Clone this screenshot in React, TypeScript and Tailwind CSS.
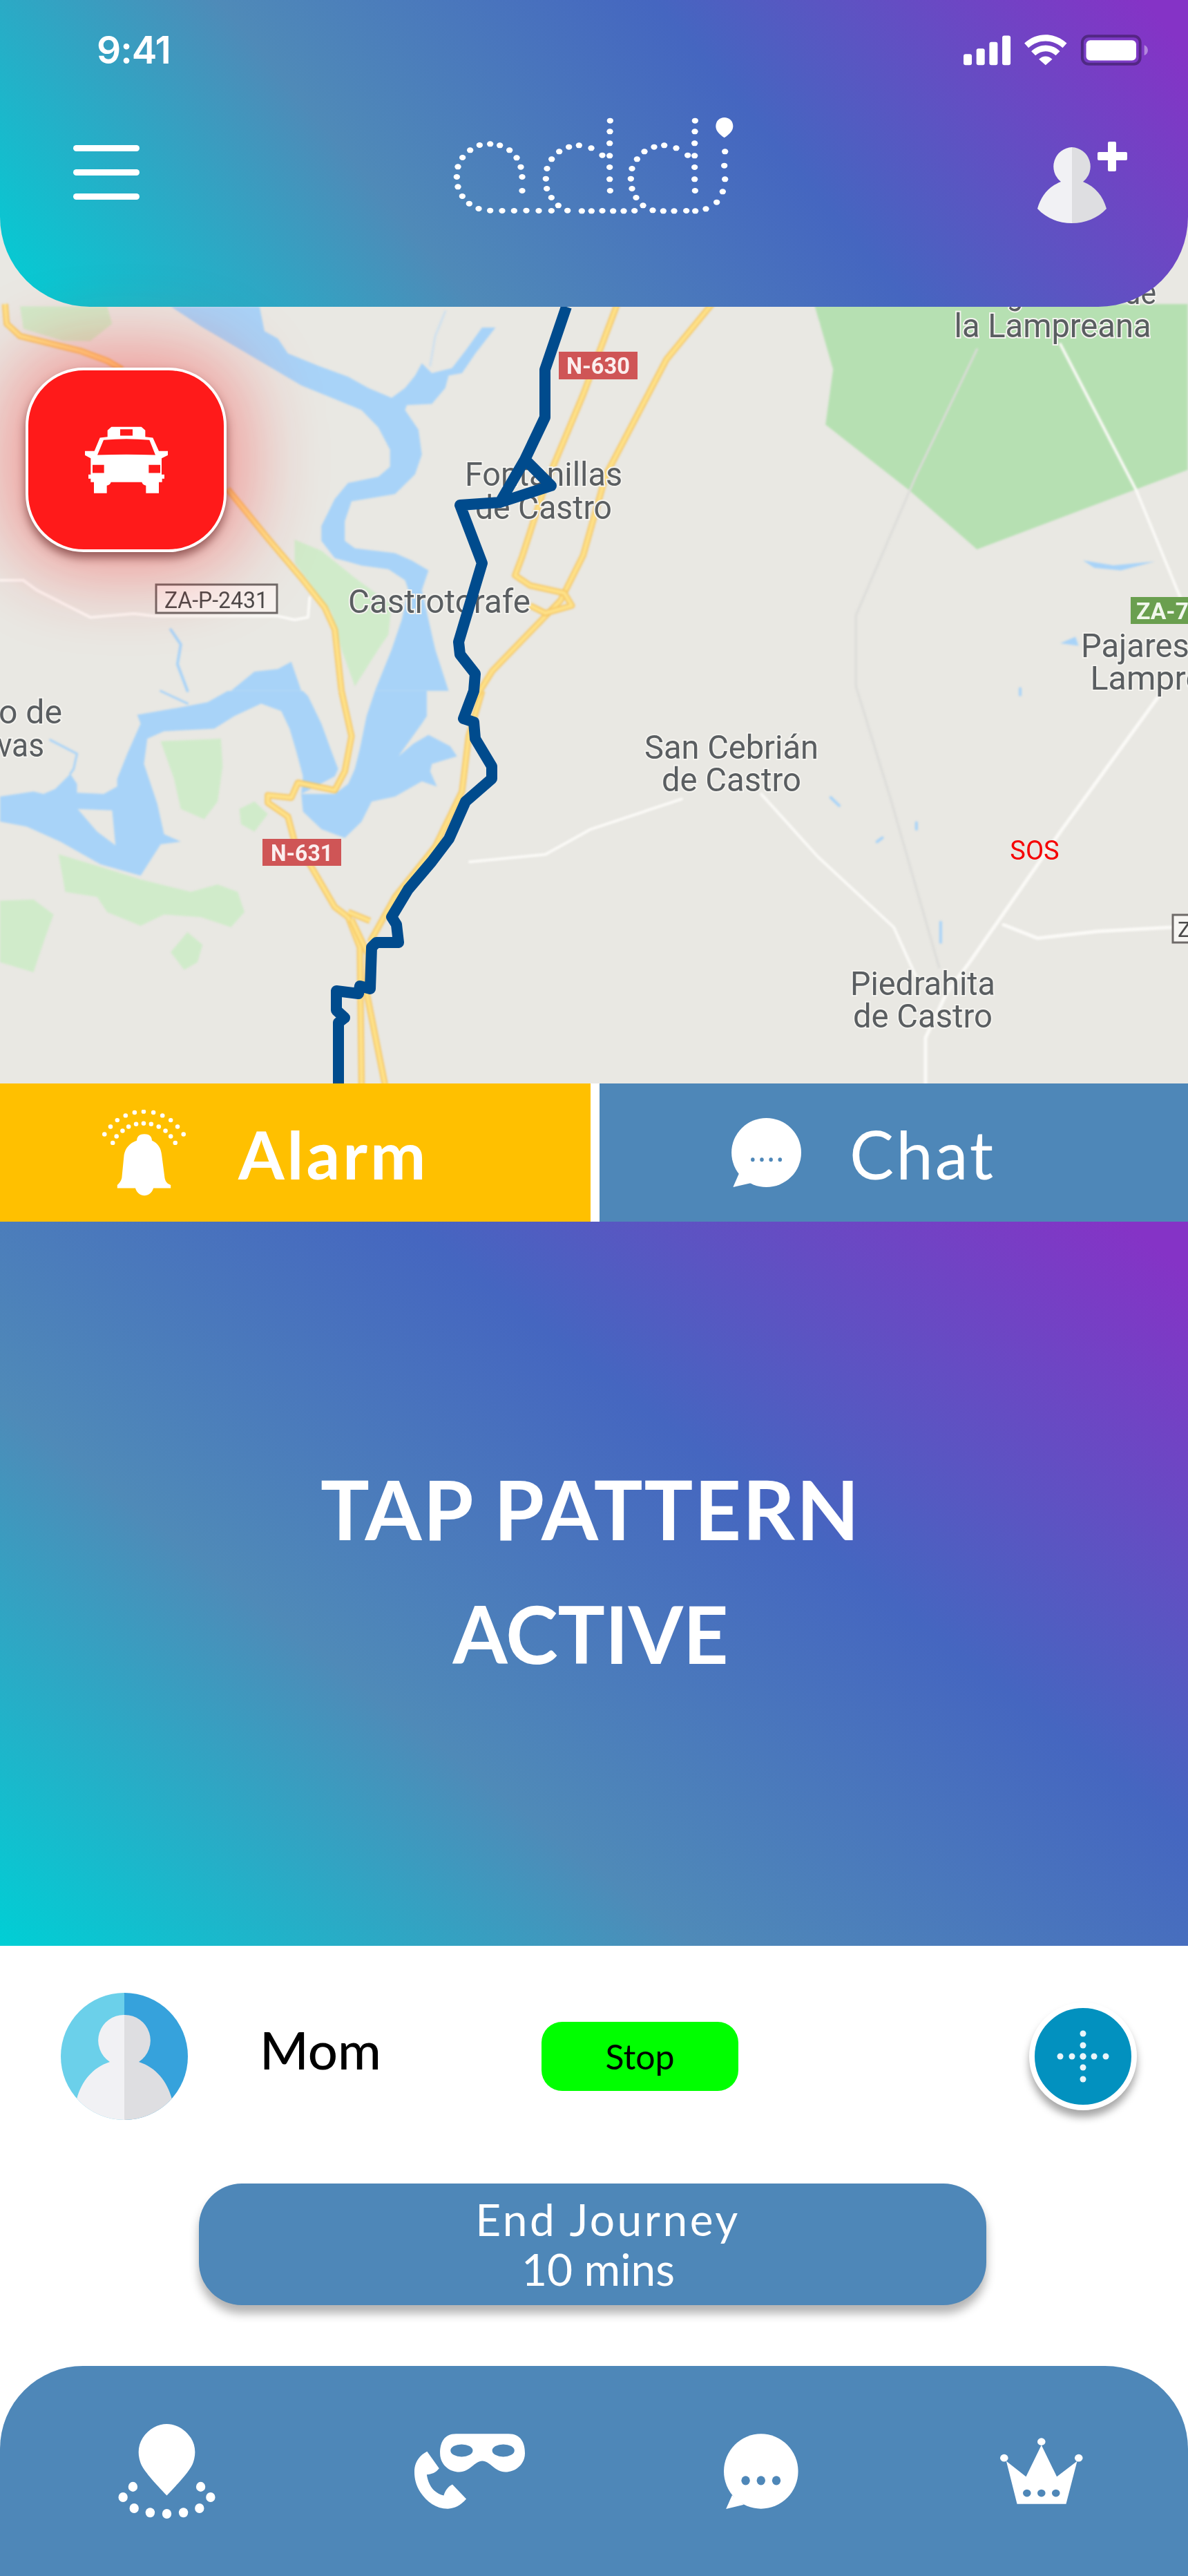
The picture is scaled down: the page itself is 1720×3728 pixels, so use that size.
const logoDots = [
  [283, 240], [329, 235], [371, 241], [413, 262], [444, 295], [462, 335], [468, 378], [468, 438],
  [242, 262], [209, 294], [189, 334], [184, 378], [189, 421], [208, 462], [238, 494], [279, 516],
  [329, 524], [381, 525], [433, 525], [486, 524], [540, 525], [595, 525], [625, 502], [665, 524],
  [727, 526], [769, 526], [816, 525], [863, 526], [909, 526], [956, 525], [993, 502], [1035, 523],
  [1081, 526], [1128, 526], [1181, 525], [1220, 526], [1266, 517], [1313, 488], [1339, 442],
  [1349, 388], [1346, 329], [1349, 268],
  [596, 301], [629, 268], [671, 248], [715, 241], [768, 253], [576, 342], [571, 386], [575, 429], [595, 468],
  [850, 134], [849, 181], [848, 232], [816, 284], [848, 286], [848, 336], [848, 388], [850, 438],
  [967, 301], [999, 268], [1041, 248], [1085, 241], [1137, 253], [945, 342], [940, 386], [945, 429], [963, 468],
  [1219, 134], [1218, 181], [1217, 232], [1187, 284], [1217, 286], [1217, 336], [1217, 388], [1219, 438],
];

// the map shapes were measured on three squashed crops, each has its own transform
const cropTop = "translate(0 440) scale(0.4847 0.357)";
const cropBottom = "translate(0 1000) scale(0.4847 0.3635)";
const cropWide = "translate(0 440) scale(1.0965 0.7273)";

const mapLabels = [
  { t: "Manganeses de", x: 1524, y: 440, w: 300 },
  { t: "la Lampreana", x: 1524, y: 488, w: 285 },
  { t: "Fontanillas", x: 787, y: 703, w: 228 },
  { t: "de Castro", x: 787, y: 751, w: 198 },
  { t: "Castrotorafe", x: 636, y: 887, w: 264 },
  { t: "o de", x: 44, y: 1047, w: 92 },
  { t: "vas", x: 30, y: 1095, w: 68 },
  { t: "San Cebrián", x: 1059, y: 1098, w: 252 },
  { t: "de Castro", x: 1059, y: 1145, w: 202 },
  { t: "Piedrahita", x: 1336, y: 1440, w: 210 },
  { t: "de Castro", x: 1336, y: 1487, w: 202 },
  { t: "Pajares de", x: 1675, y: 951, w: 220 },
  { t: "Lampreana", x: 1700, y: 998, w: 243 },
];

function Road({ d, wide = 9, thin = 5 }: { d: string; wide?: number; thin?: number }) {
  return (
    <>
      <path d={d} fill="none" stroke="#f6c662" strokeWidth={wide} strokeLinejoin="round" vectorEffect="non-scaling-stroke" />
      <path d={d} fill="none" stroke="#fee28a" strokeWidth={thin} strokeLinejoin="round" vectorEffect="non-scaling-stroke" />
    </>
  );
}

function Track({ d, color = "#fbfaf7", width = 4 }: { d: string; color?: string; width?: number }) {
  return <path d={d} fill="none" stroke={color} strokeWidth={width} strokeLinejoin="round" strokeLinecap="round" vectorEffect="non-scaling-stroke" />;
}

function MapLayer() {
  return (
    <svg className="absolute inset-0" width="1720" height="1568" viewBox="0 0 1720 1568">
      <rect width="1720" height="1568" fill="#e9e8e3" />

      <g className="blur-[1.5px]">
        {/* big park + thin lines on the right */}
        <g transform={cropWide}>
          <path d="M1075 0H1568V330L1290 488L1200 370L1090 240L1100 130Z" fill="#b6e0b2" />
          <Track d="M1290 90L1210 340L1130 620L1130 760L1175 980L1240 1320" color="#dcdcd9" width={3} />
          <Track d="M1400 80L1500 370L1560 590" />
          <Track d="M1530 780L1400 1050L1280 1310L1250 1370L1222 1460V1550" width={5} />
          <Track d="M1325 1235L1370 1262L1450 1248L1550 1240" width={5} />
          <Track d="M1005 975L1080 1100L1180 1240L1210 1340" />
          <Track d="M900 985L780 1045L720 1095L620 1110" />
          <path d="M1430 510L1470 520L1525 512L1480 530L1445 525Z" fill="#a8d3f8" />
          <path d="M1400 675L1420 662L1424 680Z" fill="#a8d3f8" />
          <Track d="M1097 982L1108 998M1158 1070L1165 1062M1210 1032V1045M1242 1230V1270M1347 765V778" color="#a8d3f8" width={4} />
        </g>

        {/* upper left, around the red button */}
        <g transform={cropTop}>
          <path d="M60 10H320L335 80L270 150H190L70 100Z" fill="#d0ebca" />
          <path d="M880 955L960 1000L1060 1110L1170 1220L1160 1340L1130 1400L1060 1550L1020 1400L990 1250L880 1050Z" fill="#d0ebca" />
          <path
            fill="#a8d3f8"
            d="M510 10L600 90L700 170L800 250L900 330L1000 385L1080 430L1130 500L1165 590L1165 660L1130 700L1040 725L1000 790L960 900L960 960L1000 1030L1080 1060L1160 1075L1210 1120L1220 1160L1200 1280L1170 1400L1120 1568H1340L1300 1400L1280 1280L1260 1160L1280 1080L1230 1040L1180 1010L1060 990L1030 960L1030 880L1050 800L1180 770L1240 690L1260 610L1250 510L1210 430L1215 410L1290 405L1330 340L1340 290L1380 280L1420 200L1480 95L1440 95L1390 190L1350 260L1290 280L1260 240L1240 290L1210 340L1170 380L1100 340L1040 295L950 250L860 200L830 140L790 110L775 10Z"
          />
          <path fill="#a8d3f8" d="M690 1568L760 1490L830 1480L870 1450L900 1568Z" />
          <Track d="M1330 30L1300 130L1285 250" color="#cfe0ee" width={3} />
          <Track d="M510 1320L540 1380L530 1460L560 1568" color="#a8d3f8" width={4} />
          <Track d="M0 1120H70L110 1160L270 1270L400 1255L460 1265H830L880 1280L920 1270L925 1190" />
          <Road d="M15 0L20 80L60 130L240 190L320 230L365 265M680 750L800 950L900 1110L970 1230L1000 1320L1020 1568" />
        </g>

        {/* lower left, reservoir */}
        <g transform={cropBottom}>
          <g fill="#d0ebca">
            <path d="M480 200L660 190L665 300L650 440L610 510L540 470L520 350Z" />
            <path d="M715 470L760 440L800 490L760 560L720 530Z" />
            <path d="M175 650L300 700L420 750L570 800L650 770L710 800L730 880L690 940L600 900L490 890L420 935L320 880L290 820L195 800Z" />
            <path d="M0 835L100 830L160 890L130 1000L100 1120L0 1080Z" />
            <path d="M560 960L605 1010L590 1080L550 1110L510 1040Z" />
          </g>
          <g fill="#a8d3f8">
            <path d="M1120 0L1095 100L1075 230L1060 310L1040 370L1000 410H900L905 480L960 550L1030 585L1080 520L1110 440L1180 420L1260 360L1305 380L1285 320L1290 290L1365 260L1345 220L1280 175L1235 210L1190 260L1260 130L1275 100V0Z" />
            <path
              fillRule="evenodd"
              d="M680 0L620 45L560 60L410 95L420 130L380 250L350 350V380L310 410L230 405V370L210 330L165 390L130 410L100 400L0 420V520L80 540L180 600L300 690L420 735L480 610L540 600L490 570L470 450L430 290L440 190L490 160L640 150L700 100L780 50L840 80L865 150L885 240L905 340L900 410L1000 340L1010 310L990 240L960 130L920 20L905 0ZM232 470L335 475L345 615L290 560Z"
            />
          </g>
          <Track d="M150 195L230 250L220 310L210 330M480 0L560 50" color="#a8d3f8" width={3} />
          <Road d="M1020 0L1050 180L1030 320L1000 395L890 365L870 425L800 415V445L860 500L880 600L930 700L1000 860L1040 900L1075 1020L1080 1568" />
          <Road d="M1050 910L1100 1050L1095 1200L1150 1568" />
          <Road d="M1040 880L1105 915" />
          <Road d="M1105 1000L1180 820L1300 620L1380 400L1400 180L1440 0" />
        </g>

        {/* roads past Fontanillas */}
        <g transform={cropWide}>
          <Road d="M940 0L880 110L800 340L770 500L740 590L650 730L625 790" />
          <Road d="M815 0L770 180L720 360L690 500L680 540L700 560L745 575L755 600L720 615L700 600" />
        </g>
      </g>

      <g className="blur-[0.6px]">
        {mapLabels.map((l) => (
          <text
            key={l.t + l.y}
            x={l.x}
            y={l.y}
            textAnchor="middle"
            textLength={l.w}
            lengthAdjust="spacingAndGlyphs"
            className="fill-[#5a5e61] stroke-[#f4f3ef] [paint-order:stroke] [font-family:Roboto,sans-serif] text-[48px]"
            strokeWidth="4"
          >
            {l.t}
          </text>
        ))}

        {/* road signs */}
        <rect x="809" y="509" width="114" height="40" fill="#cf5556" />
        <text x="866" y="541" textAnchor="middle" textLength="92" lengthAdjust="spacingAndGlyphs" className="fill-[#fbeeee] font-bold [font-family:Roboto,sans-serif] text-[34px]">N-630</text>
        <rect x="380" y="1214" width="114" height="39" fill="#cf5556" />
        <text x="437" y="1246" textAnchor="middle" textLength="90" lengthAdjust="spacingAndGlyphs" className="fill-[#fbeeee] font-bold [font-family:Roboto,sans-serif] text-[34px]">N-631</text>
        <rect x="226" y="846" width="175" height="41" fill="#f7f3f0" stroke="#6e6a68" strokeWidth="3" />
        <text x="313" y="880" textAnchor="middle" textLength="150" lengthAdjust="spacingAndGlyphs" className="fill-[#4a4a4a] [font-family:Roboto,sans-serif] text-[34px]">ZA-P-2431</text>
        <rect x="1637" y="864" width="90" height="39" fill="#6a9f4f" />
        <text x="1645" y="896" textLength="76" lengthAdjust="spacingAndGlyphs" className="fill-[#f1f7ec] font-bold [font-family:Roboto,sans-serif] text-[34px]">ZA-7</text>
        <rect x="1698" y="1324" width="40" height="40" fill="#f7f6f3" stroke="#6e6a68" strokeWidth="3" />
        <text x="1705" y="1356" className="fill-[#4a4a4a] [font-family:Roboto,sans-serif] text-[32px]">Z</text>

        {/* route */}
        <path
          d="M820 444L789 535L789 604L760 665L724 727L760 665L798 703L724 727L666 731L698 815L664 929L666 947L688 975L686 1000L671 1040L686 1045L688 1069L712 1109V1127L674 1160L650 1214L625 1247L591 1287L567 1327L574 1338L577 1364H545L538 1371L536 1431L521 1427L519 1438L487 1434V1462L499 1473L490 1480V1568"
          fill="none"
          stroke="#004b8d"
          strokeWidth="16"
          strokeLinejoin="round"
        />
      </g>

      <text x="1498" y="1244" textAnchor="middle" className="fill-[#f50000] [font-family:Roboto,sans-serif] text-[38px]">SOS</text>
    </svg>
  );
}

function StatusIcons() {
  return (
    <svg width="267" height="47" viewBox="48 55 800 140">
      <g fill="#fff">
        <rect x="48" y="142" width="36" height="48" rx="9" />
        <rect x="104" y="118" width="36" height="72" rx="9" />
        <rect x="160" y="90" width="36" height="100" rx="9" />
        <rect x="216" y="62" width="36" height="128" rx="9" />
        <path d="M312 95C365 46 443 46 496 95L478 115C435 76 373 76 330 115Z" />
        <path d="M342 130C378 95 430 95 466 130L448 148C422 124 386 124 360 148Z" />
        <path d="M375 165C392 148 416 148 433 165L404 190Z" />
      </g>
      <rect x="563" y="64" width="251" height="122" rx="28" fill="none" stroke="#000" strokeOpacity="0.33" strokeWidth="12" />
      <rect x="580" y="82" width="217" height="88" rx="18" fill="#fff" />
      <path d="M832 103C853 110 853 141 832 148Z" fill="#fff" fillOpacity="0.4" />
    </svg>
  );
}

function Logo() {
  return (
    <svg width="520" height="220" viewBox="0 0 1560 660">
      {logoDots.map(([x, y]) => (
        <ellipse key={`${x}-${y}`} cx={x} cy={y} rx="14" ry="12" fill="#fff" />
      ))}
      <path d="M1346 208C1320 190 1309 175 1309 158C1309 135 1326 120 1346 120C1367 120 1384 135 1384 158C1384 175 1372 190 1346 208Z" fill="#fff" />
    </svg>
  );
}

function AddUserIcon() {
  return (
    <svg width="132" height="119" viewBox="1501 205 132 119">
      <path d="M1552 213A28 28 0 0 0 1536 263C1518 270 1507 284 1502 302C1515 316 1533 323 1552 323Z" fill="#f1f1f4" />
      <path d="M1552 213A28 28 0 0 1 1568 263C1586 270 1597 284 1602 302C1589 316 1571 323 1552 323Z" fill="#dedee1" />
      <rect x="1604" y="205" width="12" height="43" rx="2" fill="#fff" />
      <rect x="1589" y="220" width="43" height="12" rx="2" fill="#fff" />
    </svg>
  );
}

function TaxiIcon() {
  return (
    <svg width="120" height="97" viewBox="360 358 360 290">
      <path
        fill="#fff"
        fillRule="evenodd"
        d="M458 403V375L475 360H605L622 375V403L655 407L681 465H720V483L693 496V567H705V585H695V600H681V648H625V615Q610 612 607 600H473Q470 612 455 615V648H399V600H385V585H375V567H385V496L360 483V465H401L425 407ZM441 417Q540 408 640 417L666 482Q540 478 414 482ZM513 370H567V398H513ZM393 525H443V560H393ZM637 525H687V560H637Z"
      />
    </svg>
  );
}

const bellDots = [
  [137, 311], [145, 278], [154, 250], [165, 230], [177, 217], [189, 213], [202, 217], [214, 230], [225, 250], [234, 278], [242, 311],
  [148, 348], [153, 320], [161, 296], [169, 278], [179, 267], [189, 264], [199, 267], [209, 278], [218, 296], [225, 320], [231, 348],
];

function BellIcon() {
  return (
    <svg width="121" height="125" viewBox="134 205 111 373" preserveAspectRatio="none">
      <path
        fill="#fff"
        d="M190 310C182 310 180 325 180 338C170 350 165 370 163 400L160 500C159 515 156 525 154 530V544H178C180 565 185 576 190 576C195 576 200 565 202 544H225V530C220 525 218 515 217 500L213 400C212 370 208 350 200 338C200 325 198 310 190 310Z"
      />
      {bellDots.map(([x, y]) => (
        <ellipse key={`${x}-${y}`} cx={x} cy={y} rx="3" ry="9.5" fill="#fff" />
      ))}
    </svg>
  );
}

function SmallChatIcon() {
  return (
    <svg width="102" height="100" viewBox="965 240 93 300" preserveAspectRatio="none">
      <ellipse cx="1012" cy="390" rx="46" ry="150" fill="#fff" />
      <path d="M976 480L968 540L995 520Z" fill="#fff" />
      {[994, 1006, 1018, 1030].map((x) => (
        <ellipse key={x} cx={x} cy="421" rx="2.5" ry="9" fill="#4e87b8" />
      ))}
    </svg>
  );
}

function PersonAvatar() {
  return (
    <svg width="184" height="184" viewBox="0 0 184 184" className="shrink-0">
      <defs>
        <clipPath id="avatar-clip">
          <circle cx="92" cy="92" r="92" />
        </clipPath>
      </defs>
      <g clipPath="url(#avatar-clip)">
        <rect width="92" height="184" fill="#6bd0ea" />
        <rect x="92" width="92" height="184" fill="#36a2dc" />
        <path d="M92 32A37 37 0 0 0 71 100C46 108 30 128 23 154L23 190H92Z" fill="#f1f1f4" />
        <path d="M92 32A37 37 0 0 1 113 100C138 108 154 128 161 154L161 190H92Z" fill="#dedee1" />
      </g>
    </svg>
  );
}

function DotsCross() {
  const offsets = [-33, -16, 0, 16, 33];
  return (
    <svg width="80" height="80" viewBox="-40 -40 80 80">
      {offsets.map((o) => (
        <g key={o} fill="#e9f5fa">
          <circle cx={o} cy="0" r="4.5" />
          <circle cx="0" cy={o} r="4.5" />
        </g>
      ))}
    </svg>
  );
}

function NavPin() {
  const dots = [[208, 357], [428, 357], [176, 402], [460, 402], [212, 450], [424, 450], [264, 469], [372, 469], [318, 474]];
  return (
    <svg width="141" height="137" viewBox="160 85 316 410" preserveAspectRatio="none">
      <path fill="#fff" d="M318 395C280 340 240 285 232 250C222 210 226 175 240 145C260 105 290 85 318 85C346 85 376 105 396 145C410 175 414 210 404 250C396 285 356 340 318 395Z" />
      {dots.map(([x, y]) => (
        <ellipse key={`${x}-${y}`} cx={x} cy={y} rx="15" ry="21" fill="#fff" />
      ))}
    </svg>
  );
}

function NavPhoneMask() {
  return (
    <svg width="160" height="109" viewBox="1120 130 358 326" preserveAspectRatio="none">
      <path
        fill="#fff"
        fillRule="evenodd"
        d="M1255 131H1425C1465 131 1478 170 1478 215C1478 260 1450 296 1415 296C1380 296 1365 248 1340 248C1315 248 1300 296 1265 296C1230 296 1203 260 1203 215C1203 170 1215 131 1255 131ZM1273 176A36 27 0 1 0 1273 230A36 27 0 1 0 1273 176ZM1408 176A36 27 0 1 0 1408 230A36 27 0 1 0 1408 176Z"
      />
      <path
        fill="#fff"
        d="M1161 207L1200 280C1190 298 1175 306 1160 307C1165 350 1180 385 1215 398C1220 375 1230 358 1243 350L1288 413C1270 440 1250 455 1228 455C1190 455 1160 425 1140 385C1125 355 1120 325 1120 295C1120 255 1135 225 1161 207Z"
      />
    </svg>
  );
}

function NavChat() {
  return (
    <svg width="108" height="109" viewBox="197 130 243 326" preserveAspectRatio="none">
      <ellipse cx="318" cy="293" rx="121" ry="162" fill="#fff" />
      <path d="M224 396L204 456L262 437Z" fill="#fff" />
      {[268, 318, 368].map((x) => (
        <ellipse key={x} cx={x} cy="333" rx="14" ry="20" fill="#4e87b8" />
      ))}
    </svg>
  );
}

function NavCrown() {
  return (
    <svg width="120" height="96" viewBox="1093 143 269 290" preserveAspectRatio="none">
      <path fill="#fff" d="M1113 245L1177 313L1227 175L1277 313L1343 245L1307 432H1148Z" />
      {[[1227, 160], [1106, 231], [1348, 231]].map(([x, y]) => (
        <ellipse key={x} cx={x} cy={y} rx="13" ry="16" fill="#fff" />
      ))}
      {[1180, 1227, 1274].map((x) => (
        <ellipse key={x} cx={x} cy="385" rx="13" ry="16" fill="#4e87b8" />
      ))}
    </svg>
  );
}

export default function App() {
  return (
    <div className="w-[1720px] h-[3728px] flex flex-col overflow-hidden bg-white font-['Lato',sans-serif] text-white">
      {/* map with header on top */}
      <div className="relative h-[1568px]">
        <MapLayer />

        <header className="relative h-[444px] rounded-b-[130px] bg-[linear-gradient(50deg,#00cfd5_0%,#4f8ab8_33%,#4566c0_63%,#8533c6_97%)]">
          <div className="flex items-center justify-between pl-[140px] pr-[58px] h-[94px] pt-[50px]">
            <span className="font-['Inter',sans-serif] font-semibold text-[55px] leading-none tracking-[-1px]">9:41</span>
            <StatusIcons />
          </div>
          <div className="flex items-start pl-[106px] pt-[36px]">
            <div className="flex flex-col gap-[26px] mt-[80px]">
              <div className="w-[96px] h-[9px] rounded-full bg-white" />
              <div className="w-[96px] h-[9px] rounded-full bg-white" />
              <div className="w-[96px] h-[9px] rounded-full bg-white" />
            </div>
            <div className="ml-[398px]">
              <Logo />
            </div>
            <div className="ml-[381px] mt-[75px]">
              <AddUserIcon />
            </div>
          </div>
        </header>

        <div className="absolute left-[37px] top-[532px] w-[291px] h-[267px] flex items-center justify-center rounded-[84px] border-4 border-white bg-[#ff1a1a] shadow-[0_8px_14px_rgba(60,0,0,0.5),0_0_110px_30px_rgba(255,30,30,0.4)]">
          <TaxiIcon />
        </div>
      </div>

      {/* alarm / chat */}
      <div className="flex h-[200px] gap-[13px]">
        <div className="w-[855px] flex items-center bg-[#ffc000] pl-[148px] gap-[76px]">
          <BellIcon />
          <span className="pt-[4px] text-[96px] font-bold leading-none tracking-[4px]">Alarm</span>
        </div>
        <div className="flex-1 flex items-center bg-[#4e87b8] pl-[190px] gap-[70px]">
          <SmallChatIcon />
          <span className="pt-[4px] text-[96px] leading-none tracking-[3px]">Chat</span>
        </div>
      </div>

      {/* tap pattern panel */}
      <section className="h-[1048px] pb-[36px] flex flex-col items-center justify-center bg-[linear-gradient(38deg,#00cfd5_0%,#4f8ab8_33%,#4566c0_63%,#8533c6_97%)]">
        <p className="text-[118px] font-bold leading-[180px] tracking-[2px] pr-[10px]">TAP PATTERN</p>
        <p className="text-[114px] font-bold leading-[180px] pr-[10px]">ACTIVE</p>
      </section>

      {/* contact row */}
      <section className="h-[608px] flex flex-col text-black">
        <div className="flex items-center h-[172px] mt-[74px] pl-[88px]">
          <PersonAvatar />
          <span className="ml-[104px] w-[408px] pb-[20px] text-[76px] font-medium leading-none">Mom</span>
          <button className="w-[285px] h-[100px] rounded-[30px] bg-[#00ff00] text-[50px] leading-none">Stop</button>
          <div className="ml-[421px] w-[156px] h-[156px] flex items-center justify-center rounded-full border-8 border-white bg-[#0291bf] shadow-[0_10px_12px_rgba(0,0,0,0.35)]">
            <DotsCross />
          </div>
        </div>
        <button className="ml-[288px] mt-[98px] w-[1140px] h-[176px] rounded-[62px] bg-[#4e87b8] text-white text-[64px] leading-[72px] shadow-[0_12px_14px_rgba(0,0,0,0.3)]">
          <span className="block pl-[44px] tracking-[3.5px]">End Journey</span>
          <span className="block pl-[16px]">10 mins</span>
        </button>
      </section>

      {/* bottom nav */}
      <nav className="h-[304px] flex items-center pl-[171px] gap-[288px] rounded-t-[120px] bg-[#4e87b8]">
        <NavPin />
        <NavPhoneMask />
        <NavChat />
        <div className="ml-[4px]">
          <NavCrown />
        </div>
      </nav>
    </div>
  );
}
